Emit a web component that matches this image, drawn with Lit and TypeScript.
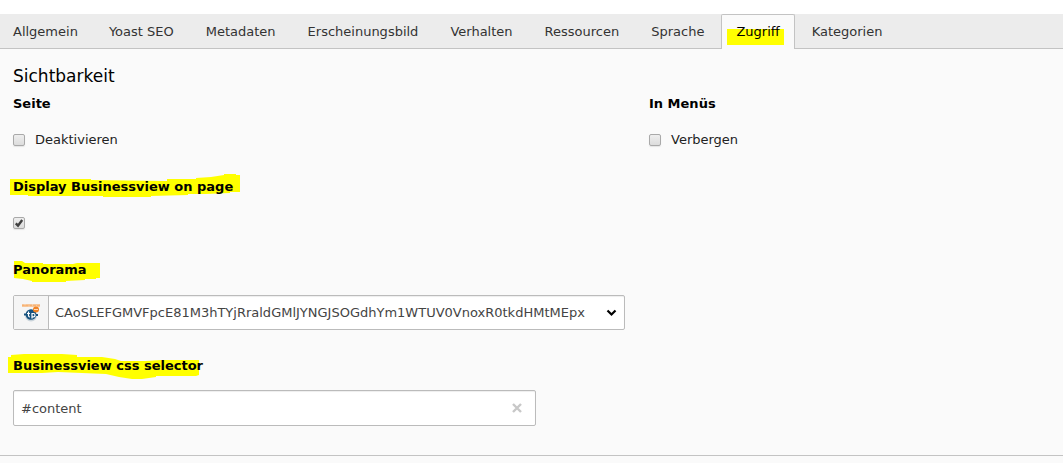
import { LitElement, html, css, svg } from "lit";
import { customElement, state } from "lit/decorators.js";

const TABS = [
  "Allgemein",
  "Yoast SEO",
  "Metadaten",
  "Erscheinungsbild",
  "Verhalten",
  "Ressourcen",
  "Sprache",
  "Zugriff",
  "Kategorien",
];

const marker = (name: string, width: number, height: number, points: string) => html`
  <svg class="marker ${name}" width=${width} height=${height} viewBox="0 0 ${width} ${height}" aria-hidden="true">
    ${svg`<polygon points=${points} fill="#ff0"></polygon>`}
  </svg>
`;

@customElement("app-root")
export class AppRoot extends LitElement {
  @state() private active = "Zugriff";
  @state() private selector = "#content";

  static styles = css`
    :host {
      display: block;
      box-sizing: border-box;
      min-height: 100vh;
      padding-top: 14px;
      background: linear-gradient(#fff 14px, #fafafa 14px);
      color: #000;
      font: 13px/18px Verdana, "DejaVu Sans", sans-serif;
    }
    * {
      box-sizing: border-box;
    }
    .tabs {
      display: flex;
      gap: 2px;
      height: 35px;
      background: #ececec;
      border-bottom: 1px solid #c3c3c3;
    }
    .tab {
      position: relative;
      height: 35px;
      padding: 0 14px;
      border: 1px solid transparent;
      border-bottom: 0;
      background: none;
      color: #333;
      font: inherit;
      white-space: nowrap;
    }
    .tab:first-child {
      padding: 0 13px 0 12px;
    }
    .tab.active {
      border-color: #c3c3c3;
      border-radius: 2px 2px 0 0;
      background: #fafafa;
      color: #000;
    }
    .text {
      position: relative;
    }
    .panel {
      padding: 15px 13px 29px;
      border-bottom: 1px solid #c3c3c3;
    }
    h2 {
      margin: 0 0 7px;
      font-size: 17px;
      line-height: 24px;
      font-weight: 400;
    }
    .columns {
      display: grid;
      grid-template-columns: minmax(0, 612px) minmax(0, 1fr);
      column-gap: 24px;
    }
    fieldset {
      margin: 0;
      padding: 0;
      border: 0;
      min-width: 0;
    }
    legend,
    .label {
      display: block;
      position: relative;
      width: fit-content;
      padding: 0;
      font-weight: 700;
    }
    .check {
      display: flex;
      align-items: center;
      gap: 10px;
      width: fit-content;
      height: 18px;
      margin-top: 18px;
      color: #222;
    }
    .box {
      appearance: none;
      width: 12px;
      height: 12px;
      margin: 0;
      border: 1px solid #a9a9a9;
      border-radius: 2px;
      background: linear-gradient(#eee, #dcdcdc);
      box-shadow: 0 1px 1px #e4e4e4;
    }
    .tickbox {
      display: grid;
      width: 12px;
    }
    .tickbox > * {
      grid-area: 1 / 1;
    }
    .tick {
      pointer-events: none;
      visibility: hidden;
    }
    .box:checked + .tick {
      visibility: visible;
    }
    .field {
      max-width: 612px;
      margin-top: 29px;
    }
    .group {
      display: flex;
      height: 35px;
      margin: 16px 0 27px;
      border: 1px solid #bbb;
      border-radius: 2px;
      background: #fff;
      box-shadow: inset 0 1px 1px #eee;
    }
    .addon {
      display: grid;
      place-items: center;
      flex: none;
      width: 35px;
      background: #f5f5f5;
      border-right: 1px solid #bbb;
    }
    .picker {
      display: grid;
      flex: 1;
      min-width: 0;
      align-items: center;
    }
    .picker > * {
      grid-area: 1 / 1;
    }
    select {
      appearance: none;
      width: 100%;
      height: 33px;
      padding: 0 24px 0 6px;
      border: 0;
      background: none;
      color: #444;
      font: inherit;
    }
    .chevron {
      justify-self: end;
      margin-right: 7px;
      pointer-events: none;
    }
    .entry {
      display: flex;
      align-items: center;
      max-width: 523px;
      height: 36px;
      margin-top: 15px;
      padding-right: 11px;
      border: 1px solid #bbb;
      border-radius: 2px;
      background: #fff;
      box-shadow: inset 0 1px 1px #eee;
    }
    .entry input {
      flex: 1;
      min-width: 0;
      height: 34px;
      padding: 0 7px;
      border: 0;
      background: none;
      color: #444;
      font: inherit;
    }
    .clear {
      display: grid;
      place-items: center;
      width: 14px;
      height: 18px;
      padding: 0;
      border: 0;
      background: none;
    }
    .marker {
      position: absolute;
    }
    .m-tab {
      left: 5px;
      top: 14px;
    }
    .m-display {
      left: -3px;
      top: -4px;
    }
    .m-pano {
      left: 0;
      top: 0;
    }
    .m-css {
      left: -5px;
      top: -3px;
    }
  `;

  render() {
    return html`
      <div class="tabs" role="tablist">
        ${TABS.map(
          (t) => html`<button
            class="tab ${t === this.active ? "active" : ""}"
            role="tab"
            aria-selected=${t === this.active}
            @click=${() => (this.active = t)}
          >${t === "Zugriff" ? marker("m-tab", 57, 16, "0,0 57,0 57,16 0,16") : ""}<span class="text">${t}</span></button>`
        )}
      </div>
      <main class="panel">
        <h2>Sichtbarkeit</h2>
        <div class="columns">
          <fieldset>
            <legend>Seite</legend>
            <label class="check"><input class="box" type="checkbox" />Deaktivieren</label>
          </fieldset>
          <fieldset>
            <legend>In Menüs</legend>
            <label class="check"><input class="box" type="checkbox" />Verbergen</label>
          </fieldset>
        </div>
        <div class="field">
          <label class="label" for="display">
            ${marker("m-display", 230, 24, "0,5 81,5 81,6 157,7 157,5 186,5 186,4 201,3 214,1 214,0 226,0 226,1 230,1 230,18 220,18 220,19 195,20 178,20 178,21 141,22 141,23 93,23 93,22 18,22 18,21 0,21")}
            <span class="text">Display Businessview on page</span>
          </label>
          <div class="check">
            <span class="tickbox">
              <input class="box" id="display" type="checkbox" checked />
              <svg class="tick" width="12" height="12" viewBox="0 0 12 12" aria-hidden="true">
                <path d="M2.8 6.4 5 8.6 9.2 3" fill="none" stroke="#404040" stroke-width="2.4"></path>
              </svg>
            </span>
          </div>
        </div>
        <div class="field">
          <label class="label" for="panorama">
            ${marker("m-pano", 88, 22, "1,0 9,0 12,2 30,2 30,3 60,3 64,2 87,2 87,17 83,17 83,18 72,18 72,19 53,20 53,21 19,21 19,20 10,18 1,17")}
            <span class="text">Panorama</span>
          </label>
          <div class="group">
            <span class="addon">
              <svg width="20" height="20" viewBox="0 0 20 20" aria-hidden="true">
                <path d="M1 2.500h18" stroke="#f7b273" stroke-width="2.400"></path>
                <path d="M3.500 1.800h1M7.500 3h1M11 2h1M15 3h1" stroke="#fbe0c8"></path>
                <ellipse cx="10" cy="12.500" rx="6" ry="6" fill="#c9d3da"></ellipse>
                <circle cx="10" cy="11.500" r="5.300" fill="#17527f"></circle>
                <path d="M3 11.500h3M17 12h-3" stroke="#17527f" stroke-width="2"></path>
                <path d="M7.500 8.500v4q0 1.500 1.500 1.500M6 10.500h3M11 15.500v-5h1.500q1.500 0 1.500 1.700t-1.500 1.700H11" fill="none" stroke="#fff" stroke-width="1.200"></path>
                <circle cx="15" cy="6.500" r="3" fill="#f18224"></circle>
                <path d="M13 6.500h4" stroke="#ffd9b5"></path>
              </svg>
            </span>
            <span class="picker">
              <select id="panorama">
                <option>CAoSLEFGMVFpcE81M3hTYjRraldGMlJYNGJSOGdhYm1WTUV0VnoxR0tkdHMtMEpx</option>
              </select>
              <svg class="chevron" width="11" height="8" viewBox="0 0 11 8" aria-hidden="true">
                <path d="M1.500 1.500 5.500 5.500 9.500 1.500" fill="none" stroke="#000" stroke-width="2.200"></path>
              </svg>
            </span>
          </div>
          <label class="label" for="selector">
            ${marker("m-css", 192, 26, "0,3 3,3 3,1 16,0 54,0 69,1 69,3 94,3 107,5 113,7 138,7 153,6 191,6 191,21 188,22 148,22 148,23 134,25 124,25 111,23 98,20 74,19 50,18 34,19 0,19")}
            <span class="text">Businessview css selector</span>
          </label>
          <div class="entry">
            <input
              id="selector"
              type="text"
              .value=${this.selector}
              @input=${(e: Event) => (this.selector = (e.target as HTMLInputElement).value)}
            />
            <button class="clear" aria-label="Eingabe löschen" @click=${() => (this.selector = "")}>
              <svg width="10" height="10" viewBox="0 0 10 10" aria-hidden="true">
                <path d="M1 1l8 8M9 1l-8 8" stroke="#c8c8c8" stroke-width="2.400"></path>
              </svg>
            </button>
          </div>
        </div>
      </main>
    `;
  }
}
